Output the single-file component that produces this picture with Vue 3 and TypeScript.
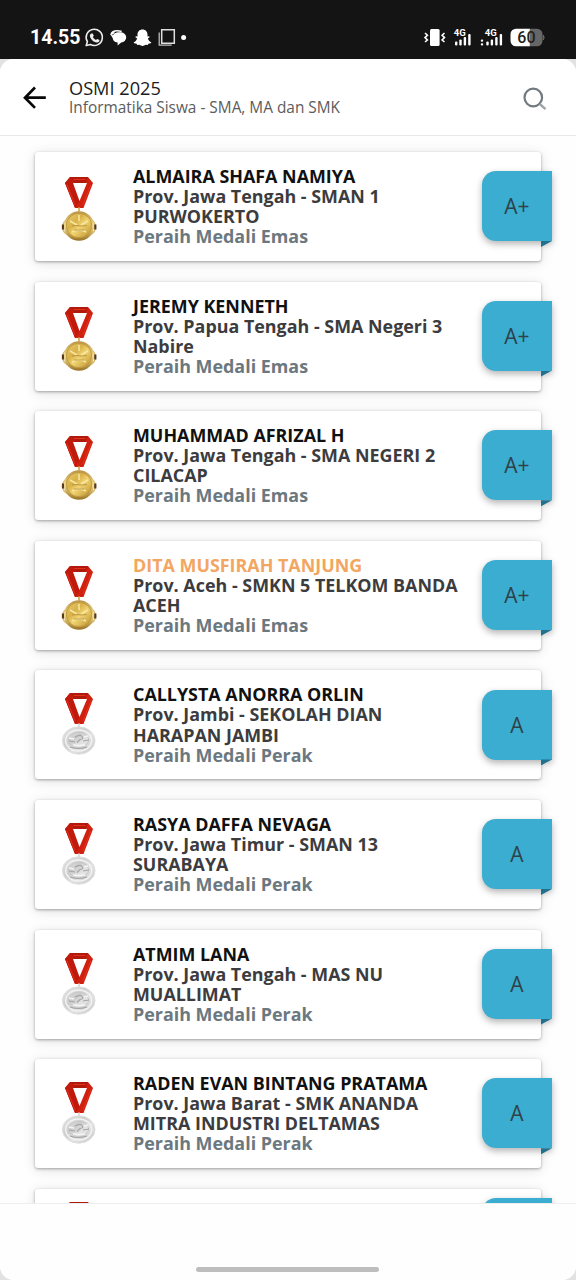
<script setup lang="ts">
type Medal = 'gold' | 'silver'

interface Winner {
  name: string
  school: string[]
  medal: Medal
  grade: string
  highlight?: boolean
}

const winners: Winner[] = [
  { name: 'ALMAIRA SHAFA NAMIYA', school: ['Prov. Jawa Tengah - SMAN 1', 'PURWOKERTO'], medal: 'gold', grade: 'A+' },
  { name: 'JEREMY KENNETH', school: ['Prov. Papua Tengah - SMA Negeri 3', 'Nabire'], medal: 'gold', grade: 'A+' },
  { name: 'MUHAMMAD AFRIZAL H', school: ['Prov. Jawa Tengah - SMA NEGERI 2', 'CILACAP'], medal: 'gold', grade: 'A+' },
  { name: 'DITA MUSFIRAH TANJUNG', school: ['Prov. Aceh - SMKN 5 TELKOM BANDA', 'ACEH'], medal: 'gold', grade: 'A+', highlight: true },
  { name: 'CALLYSTA ANORRA ORLIN', school: ['Prov. Jambi - SEKOLAH DIAN', 'HARAPAN JAMBI'], medal: 'silver', grade: 'A' },
  { name: 'RASYA DAFFA NEVAGA', school: ['Prov. Jawa Timur - SMAN 13', 'SURABAYA'], medal: 'silver', grade: 'A' },
  { name: 'ATMIM LANA', school: ['Prov. Jawa Tengah - MAS NU', 'MUALLIMAT'], medal: 'silver', grade: 'A' },
  { name: 'RADEN EVAN BINTANG PRATAMA', school: ['Prov. Jawa Barat - SMK ANANDA', 'MITRA INDUSTRI DELTAMAS'], medal: 'silver', grade: 'A' },
  { name: '', school: [], medal: 'silver', grade: '' },
]

const medalLabel: Record<Medal, string> = {
  gold: 'Peraih Medali Emas',
  silver: 'Peraih Medali Perak',
}
</script>

<template>
  <div class="phone">
    <svg class="defs" width="0" height="0" aria-hidden="true">
      <defs>
        <linearGradient id="goldFace" x1="0" y1="0" x2="1" y2="1">
          <stop offset="0" stop-color="#e9cd6c" />
          <stop offset=".35" stop-color="#d9b149" />
          <stop offset=".55" stop-color="#f0d471" />
          <stop offset="1" stop-color="#bb8c2a" />
        </linearGradient>
        <linearGradient id="goldRim" x1="0" y1="0" x2="0" y2="1">
          <stop offset="0" stop-color="#b99345" />
          <stop offset=".5" stop-color="#f3dc8c" />
          <stop offset="1" stop-color="#9a7224" />
        </linearGradient>
        <linearGradient id="silverFace" x1="0" y1="0" x2="1" y2="1">
          <stop offset="0" stop-color="#e9e9e9" />
          <stop offset=".4" stop-color="#cdcdcd" />
          <stop offset=".6" stop-color="#e4e4e4" />
          <stop offset="1" stop-color="#c6c6c6" />
        </linearGradient>
      </defs>
    </svg>

    <div class="status">
      <span class="time">14.55</span>
      <svg class="left-icons" width="108" height="24" viewBox="82 26 108 24">
        <path d="M86.2 45.6l1.2-3.9a8.1 8.1 0 1 1 3 2.8z" fill="none" stroke="#ededed" stroke-width="1.6" stroke-linejoin="round" />
        <path d="M91.2 33.600l1.500-.2 1.100 2.400-.9 1.300c.7 1.300 1.600 2.200 3 2.900l1.300-1 2.300 1.100c.1 1.600-1.100 2.500-2.600 2.400-3.500-.5-6.500-3.400-7-6.600 0-1 .5-1.800 1.300-2.300z" fill="#ededed" />
        <path d="M111 34.500c1-3 5-4.200 10-3.200" fill="none" stroke="#fff" stroke-width="1.500" stroke-linecap="round" />
        <path d="M119.500 32.300c4.200 0 6.700 2.100 6.700 5s-2.300 5-5 5.300l-3.600 3v-3.100c-3.200-.5-5-2.400-5-5.100 0-3.100 2.800-5.100 6.900-5.100z" fill="#fff" />
        <path d="M111.500 34l3-1.500M111.500 35l2 2.500" stroke="#fff" stroke-width="1.500" />
        <path d="M142.500 29.500c3.100 0 5 2.200 5 5v2.100l1.700-.4.4 1.100-1.800 1.200c.8 2 1.900 3.100 3.500 3.700l-.5 1-2.400.5-.6 1.200-2.200-.1c-1 .7-1.900 1.200-3.100 1.200s-2.100-.5-3.100-1.200l-2.200.1-.6-1.200-2.400-.5-.5-1c1.600-.6 2.700-1.700 3.500-3.700l-1.800-1.200.4-1.100 1.700.4v-2.100c0-2.800 1.900-5 5-5z" fill="#fff" />
        <path d="M161.700 29.800h12.600v13.400h-12.600z" fill="none" stroke="#dedede" stroke-width="1.500" />
        <path d="M159.200 32.500v12.700h12.500" fill="none" stroke="#bdbdbd" stroke-width="1.300" />
        <circle cx="183.600" cy="37.600" r="2.500" fill="#fff" />
      </svg>
      <svg class="right-icons" width="124" height="24" viewBox="422 26 124 24">
        <rect x="430" y="29" width="9.600" height="17" rx="1.500" fill="#fff" />
        <path d="M425 33l2.400 2.200-2.400 2.400 2.400 2.400-2.400 2M444.500 33l-2.400 2.200 2.400 2.400-2.400 2.400 2.400 2" fill="none" stroke="#fff" stroke-width="1.600" />
        <g fill="#fff">
          <rect x="455" y="41.500" width="2.400" height="4" rx="1" />
          <rect x="459.300" y="39.500" width="2.400" height="6" rx="1" />
          <rect x="463.700" y="37" width="2.400" height="8.500" rx="1" />
          <rect x="468.200" y="34" width="2.400" height="11.500" rx="1" />
          <rect x="480.800" y="39.500" width="2.400" height="2.300" rx="1" />
          <rect x="480.800" y="43.200" width="2.400" height="2.300" rx="1" />
          <rect x="486.300" y="41.500" width="2.400" height="4" rx="1" />
          <rect x="490.700" y="39.500" width="2.400" height="6" rx="1" />
          <rect x="495.200" y="37" width="2.400" height="8.500" rx="1" />
          <rect x="499.700" y="34" width="2.400" height="11.500" rx="1" />
        </g>
        <text class="net" x="453.700" y="35.800">4G</text>
        <text class="net" x="484.700" y="35.800">4G</text>
        <path d="M516 28.700h14v17.600h-14a5.500 5.500 0 0 1-5.500-5.500v-6.600a5.500 5.500 0 0 1 5.500-5.500z" fill="#fff" />
        <path d="M529.700 28.700h7.300a5.500 5.500 0 0 1 5.500 5.500v6.600a5.500 5.500 0 0 1-5.500 5.500h-7.300z" fill="#666" />
        <path d="M543.300 35q1.700 2.500 0 5z" fill="#666" stroke="#666" />
        <text class="battery" x="517.300" y="43.200">60</text>
      </svg>
    </div>

    <main class="app">
      <header class="bar">
        <svg class="back" width="26" height="26" viewBox="0 0 26 26">
          <path d="M13 2.500L3 12.700l10 10.200M3.500 12.700h20.300" fill="none" stroke="#080808" stroke-width="2.700" />
        </svg>
        <div class="titles">
          <h1>OSMI 2025</h1>
          <p>Informatika Siswa - SMA, MA dan SMK</p>
        </div>
        <svg class="search" width="26" height="26" viewBox="0 0 26 26">
          <circle cx="11.300" cy="11.500" r="8.800" fill="none" stroke="#727a80" stroke-width="2.200" />
          <path d="M17.800 18l5.700 5.200" stroke="#a0a5a8" stroke-width="2.400" />
        </svg>
      </header>

      <section class="list">
        <article v-for="(w, i) in winners" :key="i" class="card" :class="{ compact: !w.name }">
          <svg class="medal" :class="w.medal" width="38" height="68" viewBox="0 0 38 68">
            <path d="M10 1h18l5 6-9.500 25h-8.500L5 7z" fill="#d0200f" />
            <path d="M5 7l5-6 4 7 5.500 17-4.500 7z" fill="#c01a0d" />
            <path d="M10 1h18l-2.500 6h-11z" fill="#b01a0d" />
            <path d="M13 7h14L19.500 25z" fill="#fff" />
            <path d="M7 8.500l8 20.500M31 8.500L23 29M13.500 3.500h12" fill="none" stroke="#e5301c" stroke-width="1" />
            <template v-if="w.medal === 'gold'">
              <path d="M19 31.500v4" stroke="#d8b866" stroke-width="2" />
              <ellipse cx="19" cy="51" rx="16.500" ry="11" fill="none" stroke="#d8ba6c" stroke-width="1.400" />
              <path d="M3 48.500v5M35.300 48.500v5" stroke="#59371a" stroke-width="2.200" />
              <ellipse cx="19" cy="50" rx="15" ry="14.700" fill="url(#goldRim)" />
              <ellipse cx="19" cy="49.500" rx="12.700" ry="12.200" fill="url(#goldFace)" stroke="#bd963f" stroke-width=".9" />
              <path d="M10 45l7 4M28 45l-7 4M12 56q7-4 14 0M19 39v6" fill="none" stroke="#f7e7a0" stroke-width="1.500" />
              <path d="M12 50l5-.5 4 .5 6-.5M14 54h10" fill="none" stroke="#b08a35" stroke-width=".8" />
            </template>
            <template v-else>
              <path d="M19 31.500v4" stroke="#ddd" stroke-width="2" />
              <ellipse cx="18.700" cy="48.500" rx="16.300" ry="13.700" fill="url(#silverFace)" stroke="#dedede" />
              <ellipse cx="18.700" cy="48.500" rx="13" ry="10.500" fill="none" stroke="#f3f3f3" stroke-width="1.400" />
              <ellipse cx="18.700" cy="48" rx="10" ry="7.500" fill="none" stroke="#c6c6c6" stroke-width=".9" />
              <path d="M15 45q5-3 7-.5t-2 3l-3 3M9 49l6 1M23 49l6-1M10 55q8 3 17 0" fill="none" stroke="#a5a5a5" stroke-width="1.200" />
              <path d="M9 46l5 1M24 45l4-1M13 53q6 1 12 0" fill="none" stroke="#f4f4f4" stroke-width="1.300" />
            </template>
          </svg>
          <div class="info">
            <div class="name" :class="{ highlight: w.highlight }">{{ w.name }}</div>
            <div v-for="line in w.school" :key="line" class="school">{{ line }}</div>
            <div v-if="w.name" class="award">{{ medalLabel[w.medal] }}</div>
          </div>
          <div class="fold"></div>
          <div class="grade">{{ w.grade }}</div>
        </article>
      </section>

      <footer class="nav"><div class="handle"></div></footer>
    </main>
  </div>
</template>

<style>
body {
  background: #eee;
}
</style>

<style scoped>
.phone {
  width: 576px;
  height: 1280px;
  overflow: hidden;
  display: flex;
  flex-direction: column;
  background: #e2e2e2;
  font-family: 'Open Sans', 'Noto Sans', sans-serif;
}
.defs {
  position: absolute;
}
.status {
  flex: none;
  height: 59px;
  box-sizing: border-box;
  padding: 26px 30px 0 30px;
  background: #141414;
  display: flex;
  align-items: flex-start;
}
.time {
  width: 52px;
  font: 700 19.5px/24px Roboto, sans-serif;
  color: #fff;
  white-space: nowrap;
}
.right-icons {
  margin-left: auto;
}
.net {
  font: 700 9.5px Roboto, sans-serif;
  fill: #fff;
}
.battery {
  font: 500 16px Roboto, sans-serif;
  fill: #222;
}
.app {
  flex: 1;
  min-height: 0;
  display: flex;
  flex-direction: column;
  overflow: hidden;
  border-radius: 14px;
  background: #fefefe;
}
.bar {
  flex: none;
  height: 77px;
  box-sizing: border-box;
  padding: 0 29px 0 22px;
  border-bottom: 1px solid #e8e8e8;
  background: #fff;
  display: flex;
  align-items: center;
}
.back {
  margin-top: 2px;
}
.titles {
  margin-left: 21px;
  flex: 1;
}
h1 {
  margin: 0;
  font-size: 18.2px;
  font-weight: 400;
  line-height: 20px;
  color: #1c1c1c;
}
p {
  margin: 0;
  font-size: 15.4px;
  line-height: 19px;
  color: #5c5c5c;
}
.search {
  margin-top: 3px;
  margin-right: -1px;
}
.list {
  flex: 1;
  min-height: 0;
  overflow: hidden;
  padding: 16px 35px 0;
  display: flex;
  flex-direction: column;
  gap: 20.6px;
}
.card {
  flex: none;
  position: relative;
  box-sizing: border-box;
  height: 109px;
  padding: 14px 0 0 25px;
  display: flex;
  border-radius: 3px;
  background: #fff;
  box-shadow: 0 1px 3px rgba(0, 0, 0, 0.33), 0 2px 13px rgba(0, 0, 0, 0.12);
}
.medal {
  flex: none;
  margin-top: 10px;
}
.medal.silver {
  margin-top: 8px;
}
.info {
  margin-left: 35px;
  font-size: 17.9px;
  font-weight: 700;
  line-height: 20.1px;
  white-space: nowrap;
}
.name {
  color: #111;
}
.name.highlight {
  color: #f2a661;
}
.school {
  color: #3c3c3e;
}
.award {
  color: #6b7880;
}
.grade {
  position: absolute;
  right: -11px;
  top: 19.3px;
  width: 70px;
  height: 70px;
  border-radius: 14px 0 0 14px;
  background: #3aadd0;
  box-shadow: 0 3px 7px rgba(0, 0, 0, 0.3);
  color: #2f4149;
  font-size: 21px;
  line-height: 70px;
  text-align: center;
}
.fold {
  position: absolute;
  right: -11px;
  top: 89px;
  z-index: 1;
  width: 11px;
  height: 6px;
  background: #20708f;
  clip-path: polygon(0 0, 100% 0, 0 100%);
}
.compact {
  height: 89px;
  padding-top: 4px;
}
.compact .grade {
  top: 9px;
}
.compact .fold {
  top: 79px;
}
.nav {
  flex: none;
  position: relative;
  z-index: 2;
  height: 77px;
  box-sizing: border-box;
  border-top: 1px solid #eee;
  background: #fefefe;
  display: flex;
  justify-content: center;
  align-items: flex-end;
  padding: 0 1px 8px 0;
}
.handle {
  width: 183px;
  height: 5px;
  border-radius: 3px;
  background: #bdbdbd;
}
</style>
